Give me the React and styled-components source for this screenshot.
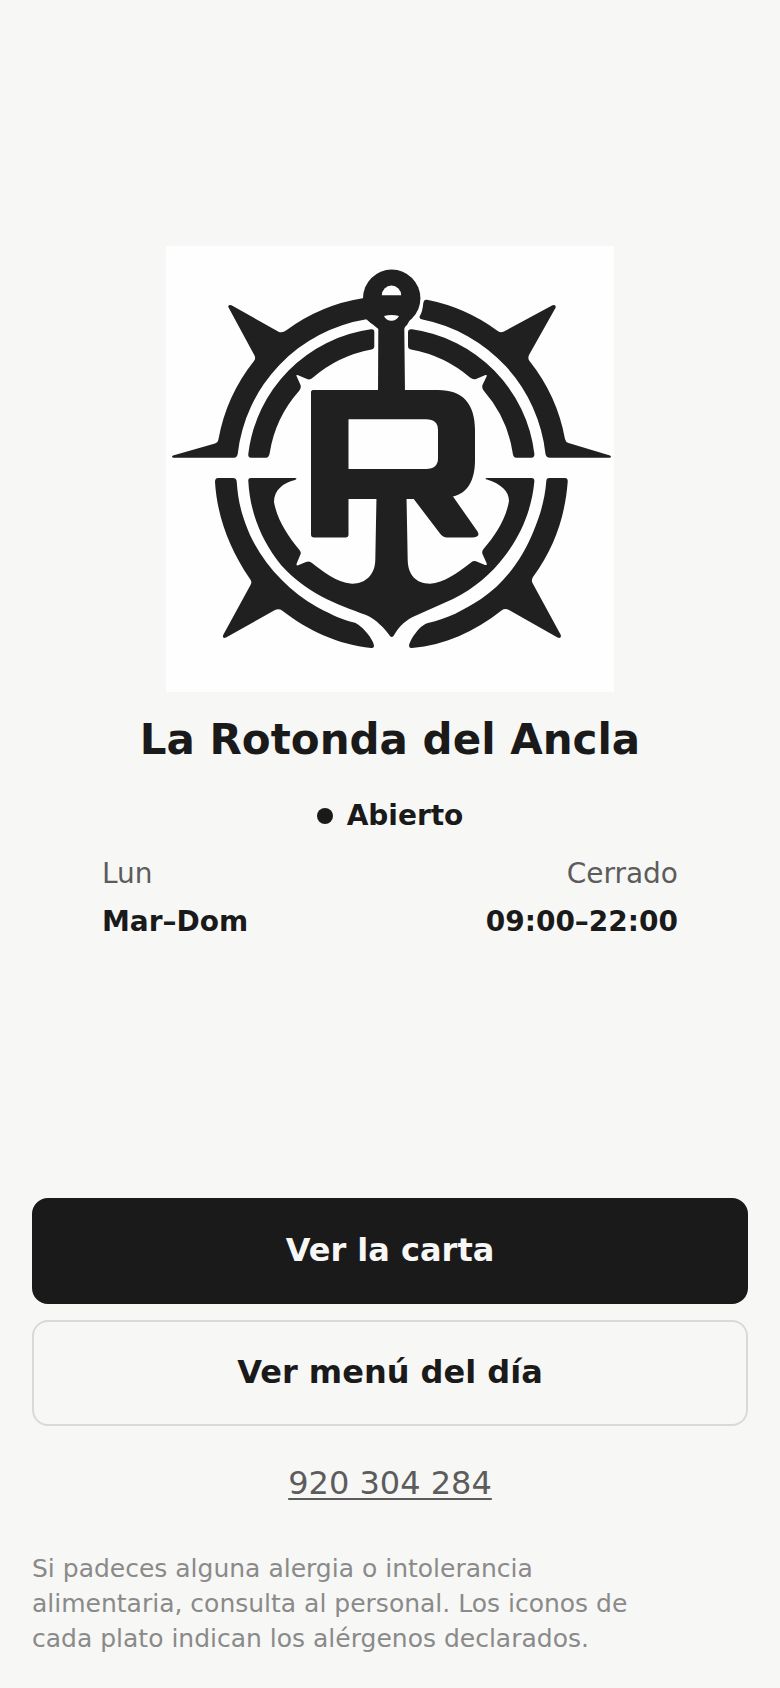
import React from "react";
import styled, { createGlobalStyle } from "styled-components";

const hours = [
  { days: "Lun", time: "Cerrado", today: false },
  { days: "Mar–Dom", time: "09:00–22:00", today: true },
];

function Logo() {
  return (
    <LogoImage viewBox="0 0 448 446" role="img" aria-label="La Rotonda del Ancla">
      <rect width="448" height="446" fill="#fefefe" />
      <g fill="#202020">
        {/* outer wheel, upper half */}
        <path d="M7 209.500 L49 197.500 Q52 196.500 52.500 193 A176 176 0 0 1 88 115 Q90 112.500 88.500 109.500 L62.300 61 Q62 58 65.500 59.300 L113 86 Q117 87 120 84.500 A176 176 0 0 1 198 52 L206 78 L200.500 73.300 A154 154 0 0 0 71.700 208 Q71 211.700 68 211.700 L7 211.700 Q5 210.500 7 209.500 Z" />
        <path d="M261 53.800 A176 176 0 0 1 331 84.500 Q334 87.500 338 85.500 L386.500 59.300 Q390 58 389.700 61.500 L363 109 Q361.500 112.500 363.500 115 A176 176 0 0 1 399 193 Q399.500 196 402.500 197 L444 209.500 Q446 211 444 211.700 L384 211.700 Q380 211.700 379.500 208 A154 154 0 0 0 256.500 73.500 Q252.500 72.500 253.800 70 Q256.500 66 257.300 57 Q258 53 261 53.800 Z" />
        {/* inner wheel, upper half */}
        <path d="M205 83.300 Q208.300 82.700 208.300 86 L208.300 100 Q208.300 103 205.500 103.500 A125 125 0 0 0 147 131.500 Q144 134.300 141 133 L131.500 129 Q130 128.500 130.500 130 L134.500 139 Q135.500 142 133 145 A122 122 0 0 0 103.700 207 Q103 211.700 100 211.700 L85 211.700 Q82 211.700 82.300 208 A143 143 0 0 1 205 83.300 Z" />
        <path d="M246 83.300 A143 143 0 0 1 368.400 208 Q368.500 211.700 365.500 211.700 L350.500 211.700 Q347 211.700 346.700 207 A122 122 0 0 0 318 145 Q315.500 142 316.500 139 L320.800 130 Q321 128.500 319.500 129 L310 133 Q307 134 304 131.500 A125 125 0 0 0 245 103.500 Q242 103 242 100 L242 86.500 Q242 82.700 246 83.300 Z" />
        {/* outer wheel, lower half */}
        <path d="M52 232 L67 232 Q70.500 232 70.700 235.500 C72 253 74 265 84 289 C98 319 123 345 151 361 C168 370 177 374 188 376.500 C196 379 208 394 208 400 Q208 402.500 205 402 C173 399 141 384 116 364.500 Q113 362.500 109 364 L60 391.500 Q56 393 57.200 389 L84.500 339 Q86.500 336 84 333 C62 301 51 268 49 236 Q49 232 52 232 Z" />
        <path d="M383 232 L399 232 Q402 232 401.700 236 C399 270 389 301 367 331 Q365 334 366.500 337 L394.800 389 Q395.500 393 391.500 391.500 L343 364 Q339 362 335.500 364.500 C308 386 279 399 246 402 Q243 402.500 243 399.500 C245 392 254 379 262 377 C281 373 298 364 315 353 C339 337 357 312 368 284 C375 267 379 252 380.300 235 Q380.500 232 383 232 Z" />
        {/* anchor */}
        <circle cx="225.700" cy="52.300" r="28.700" />
        <path d="M196 60 L200.500 73.300 L212.300 83 L212 148 L239 148 L238.300 83 Q238.300 81 241 79 L246 70 Z" />
        <path d="M210.500 250 L209.300 314 C209 329 199 338 186 337.700 C169 336 158 326 146 317 Q143.500 314.500 140 316 L131.500 319.500 Q130 319.500 130.700 317.500 L134.800 307.500 Q135 306 133.500 304 C121 289 111 273 108 256 C108 244 117 237 129 234 Q132 232.500 129 232 L85 232 Q82 232 82.300 235 C84 266 95 294 115 319 C140 347 170 358 200 369 C210 373 219 383 224 390 Q225.700 392 227.500 390 C233 380 241 373 250 369.500 L287 353 C309 342 325 328 338 311 C356 288 366 262 368.400 235 Q368.400 232 365.500 232 L321 232 Q318 232.500 321 233.500 C335 238 343 245 343 255 C340 273 329 290 317.500 303 Q315.500 305.500 316.500 308 L320.500 317 Q321.500 319.500 319 319 L310 315.300 Q307.500 314.500 305 316.500 C291 327 278 337 264 337.700 C250 337.500 242 329 241.700 314 L240.500 250 Z" />
        {/* mooring frame over the shank */}
        <rect x="145" y="144" width="90" height="109" rx="3" />
        <path d="M230 144 H272 C297 144 309 158 309 184 V214 C309 234 302 247 287 250.500 L280 253 H230 Z" />
        <rect x="145" y="144" width="37.500" height="147.500" rx="3" />
        <path d="M245 250 Q248 253 250 256 L274 287.500 Q277 291.500 281 291.500 L306 291.500 Q315 291 311.500 285.500 L287 250.500 L270 240 Z" />
      </g>
      <g fill="#fefefe">
        <path d="M182.500 173.300 H260 Q272 173.300 272 184 V212 Q272 223 260 223 H182.500 Z" />
        <path d="M215.800 49.300 A9.700 9.700 0 0 1 235.200 49.300 Z" />
        <path d="M218 70 Q225.500 68 233 70 Q230.500 74.700 225.500 74.700 Q220 74.700 218 70 Z" />
      </g>
    </LogoImage>
  );
}

export default function App() {
  return (
    <>
      <GlobalStyle />
      <Page>
        <Hero>
          <Logo />
          <Title>La Rotonda del Ancla</Title>
          <Status>
            <Dot />
            Abierto
          </Status>
          <Hours>
            <tbody>
              {hours.map(({ days, time, today }) => (
                <HoursRow key={days} $today={today}>
                  <th scope="row">{days}</th>
                  <td>{time}</td>
                </HoursRow>
              ))}
            </tbody>
          </Hours>
        </Hero>
        <Actions>
          <Button type="button" $primary>
            Ver la carta
          </Button>
          <Button type="button">Ver menú del día</Button>
        </Actions>
        <Phone href="tel:920304284">920 304 284</Phone>
        <Note>
          Si padeces alguna alergia o intolerancia alimentaria, consulta al
          personal. Los iconos de cada plato indican los alérgenos declarados.
        </Note>
      </Page>
    </>
  );
}

const GlobalStyle = createGlobalStyle`
  * {
    box-sizing: border-box;
  }
  body {
    margin: 0;
    background-color: #f7f7f5;
    color: #1a1a1a;
    font-family: "DejaVu Sans", sans-serif;
  }
`;

const Page = styled.main`
  display: flex;
  flex-direction: column;
  align-items: center;
  min-height: 100vh;
  padding: 0 32px 32px;
`;

const Hero = styled.section`
  flex: 1;
  display: flex;
  flex-direction: column;
  align-items: center;
  justify-content: center;
  width: 100%;
  padding-bottom: 6px;
`;

const LogoImage = styled.svg`
  display: block;
  width: 100%;
  max-width: 448px;
`;

const Title = styled.h1`
  margin: 22px 0 0;
  font-size: 42px;
  line-height: 52px;
  text-align: center;
`;

const Status = styled.p`
  display: flex;
  align-items: center;
  gap: 14px;
  margin: 32px 0 16px;
  font-size: 28px;
  font-weight: 700;
  line-height: 36px;
`;

const Dot = styled.span`
  width: 16px;
  height: 16px;
  border-radius: 50%;
  background-color: #1a1a1a;
`;

const Hours = styled.table`
  width: 100%;
  max-width: 576px;
  border-collapse: collapse;
  font-size: 28px;
  line-height: 48px;
`;

const HoursRow = styled.tr`
  color: ${({ $today }) => ($today ? "#1a1a1a" : "#5c5c5c")};
  th,
  td {
    padding: 0;
    font-weight: ${({ $today }) => ($today ? 700 : 400)};
    text-align: left;
  }
  td {
    text-align: right;
  }
`;

const Actions = styled.div`
  display: flex;
  flex-direction: column;
  gap: 16px;
  width: 100%;
`;

const Button = styled.button`
  width: 100%;
  height: 106px;
  padding: 0 32px 2px;
  border: 2px solid ${({ $primary }) => ($primary ? "#1a1a1a" : "#d9d9d7")};
  border-radius: 16px;
  background-color: ${({ $primary }) => ($primary ? "#1a1a1a" : "transparent")};
  color: ${({ $primary }) => ($primary ? "#f7f7f5" : "#1a1a1a")};
  font-family: inherit;
  font-size: 32px;
  font-weight: 700;
  cursor: pointer;
`;

const Phone = styled.a`
  margin-top: 37px;
  color: #5c5c5c;
  font-size: 32px;
  line-height: 40px;
  text-underline-offset: 4px;
  text-decoration-thickness: 2px;
`;

const Note = styled.p`
  align-self: flex-start;
  max-width: 640px;
  margin: 48px 0 0;
  color: #8a8a8a;
  font-size: 25px;
  line-height: 35px;
`;
